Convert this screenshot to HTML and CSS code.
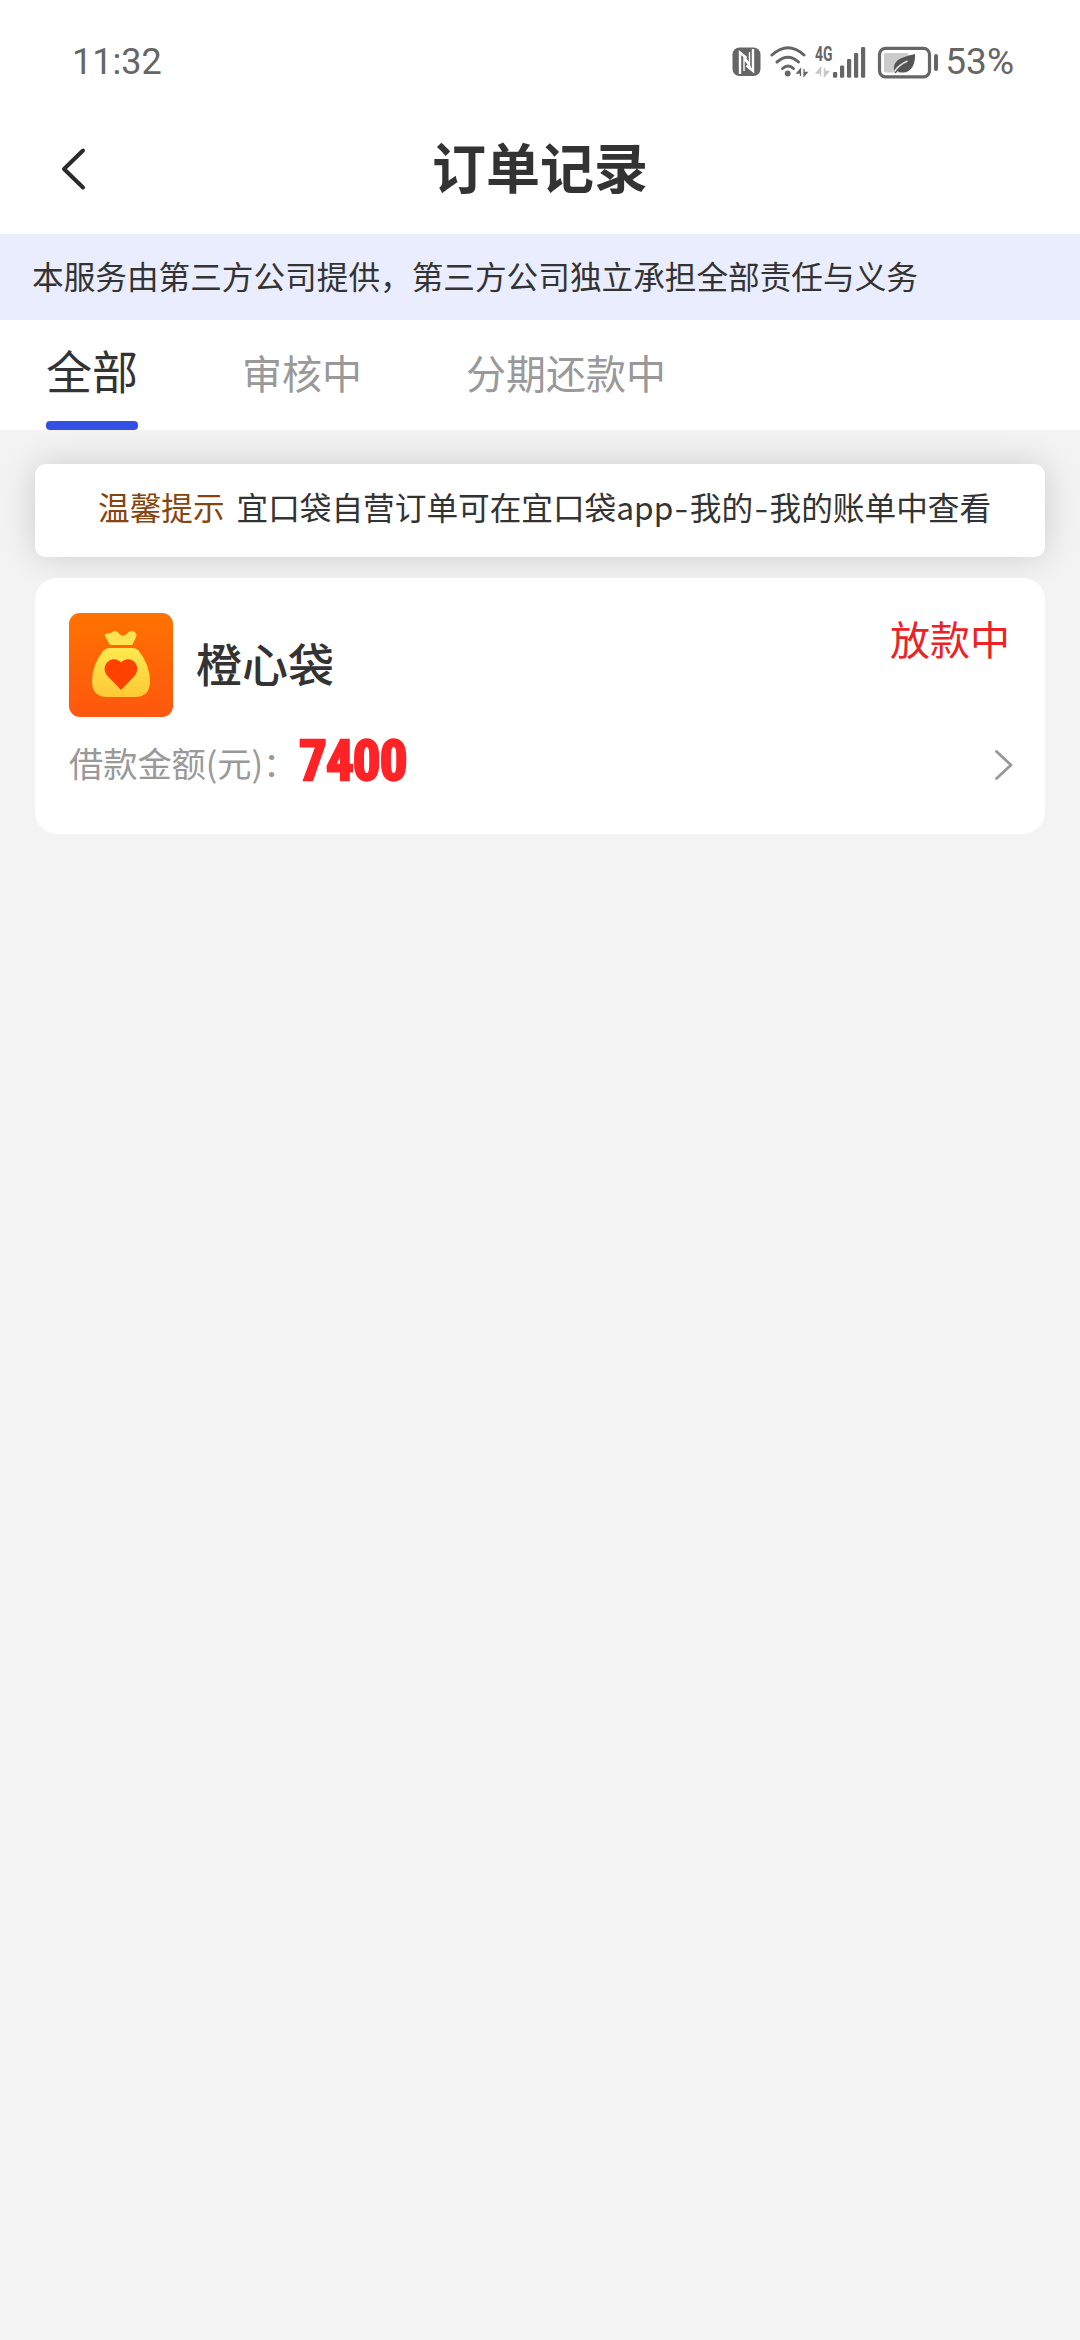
FILE: index.html
```html
<!DOCTYPE html>
<html lang="zh-CN">
<head>
<meta charset="utf-8">
<title>订单记录</title>
<link rel="stylesheet" href="styles.css">
</head>
<body>
<header class="top">
  <div class="status">
    <span class="time">11:32</span>
    <div class="status-right">
      <svg class="status-icons" viewBox="0 0 210 40" width="210" height="40">
        <!-- NFC -->
        <rect x="0.500" y="6.500" width="28" height="28.500" rx="7" fill="#666"/>
        <path d="M8 33V11.500L14.500 17M21 8V30L14.500 24.500" fill="none" stroke="#fff" stroke-width="2.400"/>
        <path d="M12 30V18L18.500 26M17.500 11V23L11 14" fill="none" stroke="#fff" stroke-width="1.400"/>
        <!-- Wi-Fi -->
        <g fill="none" stroke="#666" stroke-width="3" stroke-linecap="round">
          <path d="M40 14Q56 -0.500 72 14"/>
          <path d="M45 21Q56 11.500 66.500 21"/>
          <path d="M50.500 27.500Q56 22.500 61.500 27.500"/>
        </g>
        <circle cx="55.700" cy="32.500" r="2.900" fill="#666"/>
        <path d="M68.500 35V28l-3.500 4h3.500M72 28v7l3-3.500h-3" fill="#666" stroke="#666" stroke-width="1.300"/>
        <!-- Mobile signal -->
        <text class="net" x="83" y="19.500" textLength="17.500" lengthAdjust="spacingAndGlyphs">4G</text>
        <path d="M88.500 35V27l-4 5h4M92.500 27v8l4-4.500h-4" fill="#c8c8c8" stroke="#c8c8c8" stroke-width="1.500"/>
        <g fill="#666">
          <rect x="101" y="31" width="4.200" height="5.700" rx="1.300"/>
          <rect x="108" y="24.500" width="4.200" height="12.200" rx="1.300"/>
          <rect x="115" y="18" width="4.200" height="18.700" rx="1.300"/>
          <rect x="122" y="12" width="4.200" height="24.700" rx="1.300"/>
          <rect x="129" y="6" width="4.200" height="30.700" rx="1.300"/>
        </g>
        <!-- Battery -->
        <rect x="147.500" y="7.300" width="50" height="28.500" rx="6" fill="none" stroke="#666" stroke-width="3.200"/>
        <rect x="152" y="12" width="24.500" height="19.500" rx="2" fill="#ccc"/>
        <path d="M162.500 31C160 19.500 168 16.500 183 13C183.500 22.500 180 31 171 31.500Q167 31.500 165.500 30L163.500 32.500Z" fill="#555"/>
        <path d="M162.500 30.500Q166.500 24 175.500 20" fill="none" stroke="#ddd" stroke-width="1.700"/>
        <rect x="202" y="13" width="4" height="17" rx="2" fill="#666"/>
      </svg>
      <span class="percent">53%</span>
    </div>
  </div>
  <nav class="nav">
    <svg class="back" viewBox="0 0 28 46" width="28" height="46"><path d="M23 4.500L4 23L23 41.500" fill="none" stroke="#2b2b2b" stroke-width="4" stroke-linecap="round" stroke-linejoin="round"/></svg>
    <h1 class="title">订单记录</h1>
  </nav>
</header>
<p class="notice">本服务由第三方公司提供，第三方公司独立承担全部责任与义务</p>
<div class="tabs">
  <span class="tab active">全部</span>
  <span class="tab">审核中</span>
  <span class="tab">分期还款中</span>
</div>
<main class="content">
  <div class="tip"><span class="tip-label">温馨提示</span><span class="tip-text">宜口袋自营订单可在宜口袋<span class="latin">app</span><span class="dash">-</span>我的<span class="dash">-</span>我的账单中查看</span></div>
  <article class="order">
    <div class="order-head">
      <svg class="logo" viewBox="0 0 104 104" width="104" height="104">
        <defs>
          <linearGradient id="bg" x1="0" y1="0" x2="0" y2="1"><stop offset="0" stop-color="#ff7200"/><stop offset="1" stop-color="#ff570f"/></linearGradient>
          <linearGradient id="bag" x1="0" y1="0" x2="0" y2="1"><stop offset="0" stop-color="#ffe94e"/><stop offset="1" stop-color="#ffc936"/></linearGradient>
        </defs>
        <rect width="104" height="104" rx="11" fill="url(#bg)"/>
        <path d="M36 23Q35 20 39 20.500Q42 20.500 44 18.500Q47 17 50 20.500Q54 25 58 20.500Q61 17 65 18.500Q69 20.500 66.500 25.500L64 30.500Q63.500 32 62 32H42Q40.500 32 40 30.500Z" fill="#ffe250"/>
        <path d="M40 35H64Q67 35 69.500 37.500Q81 52 81 68Q81 84 66 84H38Q23 84 23 68Q23 52 34.500 37.500Q37 35 40 35Z" fill="url(#bag)"/>
        <path d="M52 77L38.500 63C31.500 54.500 39 46 45 46.300Q49.500 46.500 52 49.500Q54.500 46.500 59 46.300C65 46 72.500 54.500 65.500 63Z" fill="#ff4200"/>
      </svg>
      <h2 class="name">橙心袋</h2>
      <span class="state">放款中</span>
    </div>
    <div class="order-row">
      <span class="label">借款金额(元)：</span>
      <span class="amount">7400</span>
      <svg class="more" viewBox="0 0 20 34" width="20" height="34"><path d="M2.500 3.500L17 17L2.500 30.500" fill="none" stroke="#999" stroke-width="2.800" stroke-linecap="round" stroke-linejoin="round"/></svg>
    </div>
  </article>
</main>
</body>
</html>
```
FILE: styles.css
```css
* { box-sizing: border-box; }
body {
  margin: 0;
  min-height: 2340px;
  background: #f3f3f3;
  color: #333;
  font-family: "Noto Sans CJK SC", sans-serif;
}
h1, h2, p { margin: 0; }
.top { height: 234px; background: #fff; }
.status {
  height: 104px;
  padding: 18px 66px 0 72px;
  display: flex;
  align-items: center;
  justify-content: space-between;
  color: #666;
  font-family: Roboto, sans-serif;
  font-size: 36px;
}
.status-right { display: flex; align-items: center; gap: 3px; }
.status-icons { display: block; }
.time { padding-top: 2px; }
.percent { font-size: 37px; }
.net { font: 700 20px Roboto, sans-serif; fill: #666; }
.nav {
  height: 130px;
  padding: 0 60px;
  display: grid;
  grid-template-columns: 28px 1fr 28px;
  align-items: center;
}
.back { display: block; }
.title {
  padding-bottom: 6px;
  text-align: center;
  font-size: 54px;
  line-height: 74px;
  font-weight: 700;
}
.notice {
  height: 86px;
  padding-left: 32px;
  background: #eaedfd;
  font-size: 31.65px;
  line-height: 82px;
}
.tabs {
  height: 110px;
  padding-left: 46px;
  display: flex;
  gap: 104px;
  background: #fff;
  color: #999;
}
.tab { font-size: 40px; line-height: 104px; }
.tab.active {
  display: flex;
  flex-direction: column;
  justify-content: space-between;
  color: #333;
  font-size: 46px;
  line-height: 98px;
}
.tab.active::after {
  content: "";
  height: 9px;
  border-radius: 4px;
  background: #3450e4;
}
.content {
  padding: 34px 35px 0;
  display: flex;
  flex-direction: column;
  gap: 21px;
}
.tip {
  height: 93px;
  padding-left: 63px;
  display: flex;
  gap: 12px;
  border-radius: 11px;
  background: #fff;
  box-shadow: 0 0 34px rgba(0, 0, 0, 0.16);
  font-size: 31.65px;
  line-height: 85px;
  white-space: nowrap;
}
.tip-label { color: #86440f; }
.dash { display: inline-block; width: 16.5px; text-align: center; transform: scaleX(1.25); }
.order {
  height: 256px;
  padding: 35px 31px 0 34px;
  border-radius: 22px;
  background: #fff;
}
.order-head { height: 104px; display: flex; align-items: flex-start; }
.logo { display: block; }
.name {
  margin-left: 23px;
  font-size: 46px;
  line-height: 98px;
  font-weight: 500;
}
.state {
  margin-left: auto;
  margin-right: 4px;
  color: #ec2326;
  font-size: 40px;
  line-height: 50px;
}
.order-row { height: 92px; display: flex; align-items: center; }
.label {
  width: 230px;
  padding-bottom: 2px;
  color: #999;
  font-size: 34.3px;
  letter-spacing: -0.1px;
  white-space: nowrap;
}
.amount {
  padding-bottom: 5px;
  color: #fe2326;
  font: 700 55px/60px "Liberation Sans Narrow", Roboto, sans-serif;
  font-stretch: condensed;
  letter-spacing: -0.9px;
  -webkit-text-stroke: 2.4px #fe2326;
}
.more { margin: 3px 0 0 auto; }
```
